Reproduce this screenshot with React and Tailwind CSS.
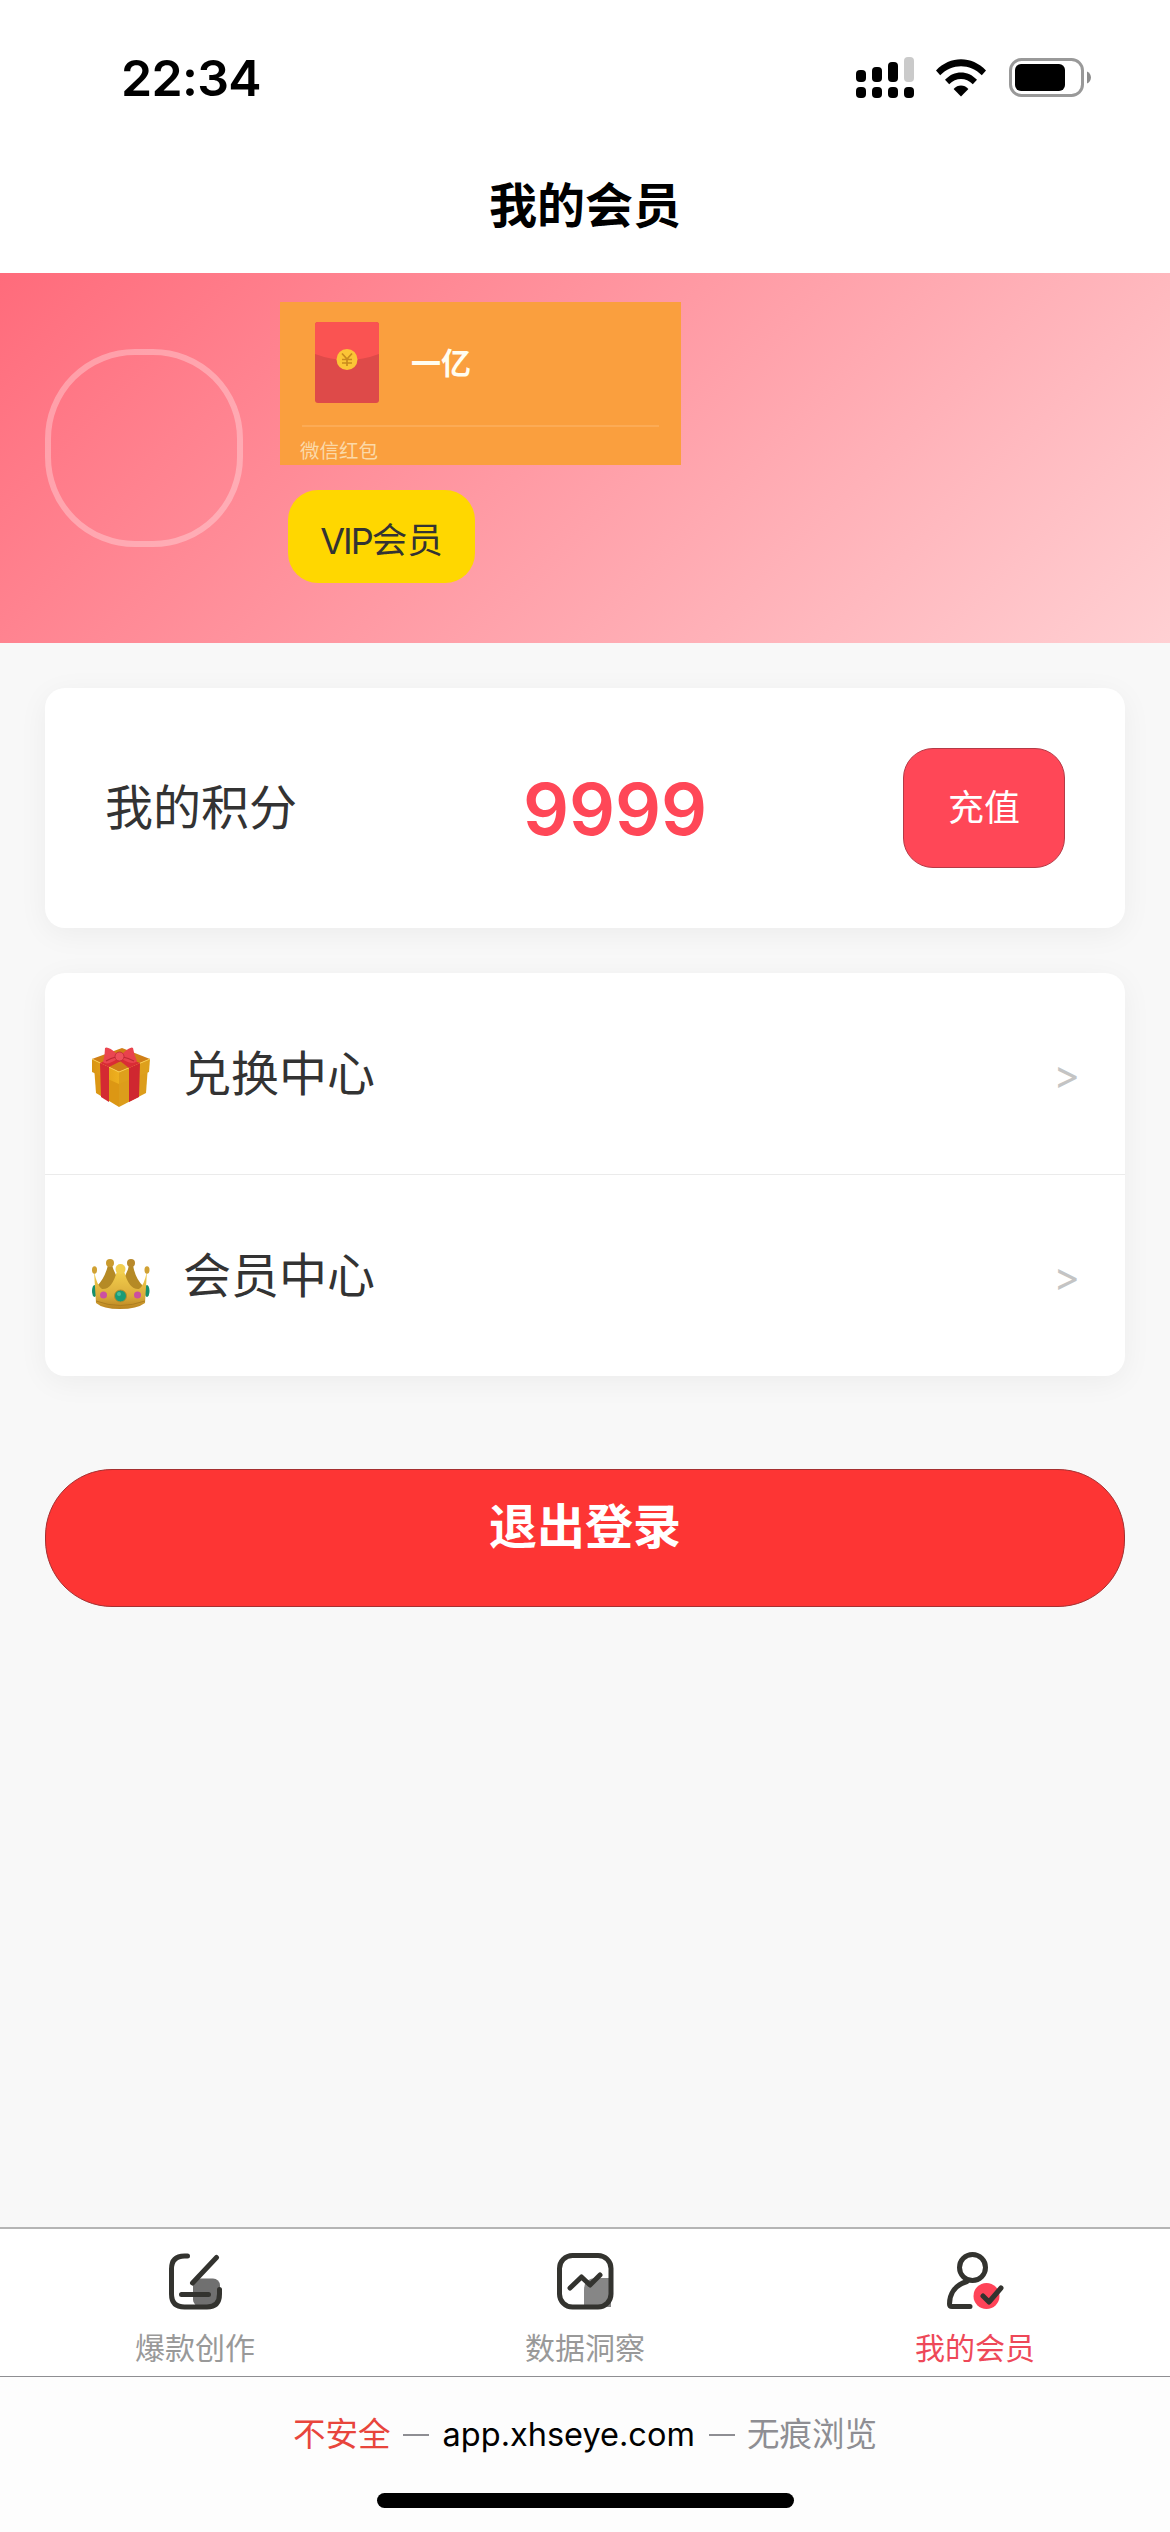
const cjk = "font-['Inter','Noto_Sans_CJK_SC',sans-serif]";

const StatusBar = () => {
  return (
    <div className="flex items-center justify-between h-[156px] pl-[121px] pr-[78px] text-black">
      <span className="font-['Inter'] font-semibold text-[50px] leading-none tracking-[-0.7px]">
        22:34
      </span>
      <div className="flex items-center">
        <svg className="w-[60px] h-[44px]" viewBox="0 0 60 44">
          <rect x="1" y="14" width="10" height="12" rx="4" />
          <rect x="17" y="11" width="10" height="15" rx="4" />
          <rect x="33" y="6" width="10" height="20" rx="4" />
          <rect x="49" y="1" width="10" height="25" rx="4" fill="#cacaca" />
          <rect x="1" y="31" width="10" height="11" rx="4" />
          <rect x="17" y="31" width="10" height="11" rx="4" />
          <rect x="33" y="31" width="10" height="11" rx="4" />
          <rect x="49" y="31" width="10" height="11" rx="4" />
        </svg>
        <svg className="w-[50px] h-[38px] ml-[21px]" viewBox="0 0 50 38">
          <path d="M0 11.5C14-3.5 36-3.5 50 11.5L45.8 16.2C34 4.2 16 4.2 4.2 16.2Z" />
          <path d="M9 20.8C18 11 32 11 41 20.8L36.8 25.3C30 18.2 20 18.2 13.2 25.3Z" />
          <path d="M17.6 30C21.8 25.4 28.2 25.4 32.4 30L25 37.6Z" />
        </svg>
        <svg className="w-[83px] h-[40px] ml-[23px]" viewBox="0 0 83 40">
          <rect x="1.5" y="1.5" width="72" height="36" rx="11" fill="none" stroke="#999" strokeWidth="3" />
          <rect x="6" y="6" width="50" height="27" rx="6" />
          <path d="M78 13.5C83.3 15.5 83.3 23.5 78 25.5Z" fill="#8c8c8c" />
        </svg>
      </div>
    </div>
  );
};

const RedPacket = () => {
  return (
    <div className="flex flex-col w-[401px] h-[163px] bg-[#fa9f3e]">
      <div className="flex h-[101px] pt-[20px] pl-[35px]">
        <svg className="w-[64px] h-[81px]" viewBox="0 0 64 81">
          <rect width="64" height="81" rx="3" fill="#de4a49" />
          <path d="M3 0H61Q64 0 64 3V32Q32 44 0 32V3Q0 0 3 0Z" fill="#fa5352" />
          <circle cx="32" cy="37.500" r="10.500" fill="#fbc536" />
          <path d="M27 31.500L32 37L37 31.500M32 37V44M27 37.500H37M27 41H37" fill="none" stroke="#c98a1d" strokeWidth="1.700" />
        </svg>
        <span className="ml-[32px] mt-[19px] text-[30px] leading-[44px] font-bold text-[#fffdf0]">
          一亿
        </span>
      </div>
      <div className="mx-[22px] mt-[22px] h-[2px] bg-[#fcab55]" />
      <span className="ml-[20px] mt-[10px] text-[19.500px] leading-[28px] text-[#fbd9a8]">
        微信红包
      </span>
    </div>
  );
};

const GiftIcon = () => {
  return (
    <svg className="w-[60px] h-[60px] mt-[6px]" viewBox="0 0 60 60">
      <defs>
        <linearGradient id="giftSide" x1="0" x2="1">
          <stop offset="0" stopColor="#d99413" />
          <stop offset="1" stopColor="#eeb01f" />
        </linearGradient>
      </defs>
      <path d="M3 19L28 31V60L5 46Z" fill="#dc9714" />
      <path d="M57 19L28 31V60L55 46Z" fill="#dc9d1b" />
      <path d="M1 12L31 1L59 12L28 25Z" fill="#d07f16" />
      <path d="M1 12L28 25V37L1 25Z" fill="url(#giftSide)" />
      <path d="M59 12L28 25V37L58 25Z" fill="#dea01c" />
      <path d="M1 12L28 25L59 12" fill="none" stroke="#f8cc4e" strokeWidth="1" />
      <path d="M9 16L18 20V55L10 50Z" fill="#d42a32" />
      <path d="M38 21L49 16L48 50L38 55Z" fill="#cf2730" />
      <path d="M9 16L22 10L32 13L18 20Z" fill="#d92c35" />
      <path d="M24 10L32 9L49 16L38 21Z" fill="#d92c35" />
      <path d="M26 7Q17-1 14 1Q14 8 12 15Q16 19 26 12Z" fill="#ea4650" />
      <path d="M31 7Q40-1 42 1Q43 8 46 14Q42 19 31 12Z" fill="#e9424c" />
      <path d="M15 14Q20 11 25 10M43 14Q37 11 32 10" fill="none" stroke="#bd2833" strokeWidth="1.200" />
      <ellipse cx="28.500" cy="9.500" rx="4.500" ry="4.500" fill="#ee505a" stroke="#bb2833" strokeWidth=".8" />
    </svg>
  );
};

const CrownIcon = () => {
  return (
    <svg className="w-[60px] h-[50px] mt-[16px]" viewBox="0 0 60 50">
      <defs>
        <linearGradient id="crownFront" x1="0" x2="0" y1="0" y2="1">
          <stop offset="0" stopColor="#f3cf4c" />
          <stop offset=".65" stopColor="#dbac3b" />
          <stop offset="1" stopColor="#b9831f" />
        </linearGradient>
      </defs>
      <path d="M6 27Q14 19 17 6H21Q24 16 29.500 24Q36 16 38 6H42Q44 19 52 27L48 38H11Z" fill="#b58a25" />
      <circle cx="19" cy="4" r="4" fill="#c99a2e" />
      <circle cx="40" cy="4" r="4" fill="#b8892b" />
      <ellipse cx="3.500" cy="32" rx="2.500" ry="6" fill="#168f6c" />
      <ellipse cx="56" cy="32" rx="2.500" ry="6" fill="#168f6c" />
      <path d="M3 12Q6 27 11 30Q21 31 26 12H33Q38 31 48 30Q53 27 56 12L54 44Q46 50 29 50Q12 50 5 44Z" fill="url(#crownFront)" />
      <path d="M5 42Q29 51 54 42" fill="none" stroke="#ad7e20" strokeWidth="1" />
      <ellipse cx="3.500" cy="11" rx="2.500" ry="3.700" fill="#d0a133" />
      <ellipse cx="56" cy="11" rx="2.500" ry="3.700" fill="#d0a133" />
      <circle cx="29.500" cy="10" r="5" fill="#f2cf50" />
      <circle cx="29.500" cy="37" r="6" fill="#1a9b76" stroke="#b98d29" strokeWidth="1" />
      <circle cx="28" cy="35" r="2" fill="#48bd9a" />
      <circle cx="12.500" cy="36" r="3.500" fill="#cc4fa1" />
      <circle cx="46.500" cy="36" r="3.500" fill="#cc4fa1" />
    </svg>
  );
};

const MenuRow = ({ icon, label }) => {
  return (
    <div className="flex items-center h-[201px] pl-[46px] pr-[45px]">
      {icon}
      <span className="ml-[32px] text-[48px] leading-[60px] text-[#333]">{label}</span>
      <span className="ml-auto mt-[3px] font-['Inter'] text-[40px] leading-[60px] text-[#c4c4c4]">
        &gt;
      </span>
    </div>
  );
};

const CreateIcon = () => {
  return (
    <svg className="w-[60px] h-[60px]" viewBox="0 0 60 60" fill="none" stroke="#33332f" strokeWidth="5" strokeLinecap="round">
      <rect x="28" y="27.500" width="27" height="28" rx="7" fill="#707070" stroke="none" />
      <path d="M22.500 5H19.500Q6.500 5 6.500 18V43Q6.500 56 19.500 56H42Q54.500 56 54.500 43V38.500" />
      <path d="M27.500 32L51.500 6.500M16.500 43.500H43.500" />
    </svg>
  );
};

const InsightIcon = () => {
  return (
    <svg className="w-[60px] h-[60px]" viewBox="0 0 60 60" fill="none" stroke="#33332f" strokeWidth="5" strokeLinecap="round" strokeLinejoin="round">
      <path d="M29 56V39Q29 27 41 27H56V56Z" fill="#868686" stroke="none" />
      <rect x="4.500" y="4.500" width="51.500" height="51.500" rx="13" />
      <path d="M15 37L26.500 26L35 34L45 24" />
    </svg>
  );
};

const MemberIcon = () => {
  return (
    <svg className="w-[60px] h-[60px]" viewBox="0 0 60 60" fill="none" stroke="#33332f" strokeWidth="5" strokeLinecap="round" strokeLinejoin="round">
      <circle cx="27.500" cy="16.500" r="13" />
      <path d="M22 30.500C10 34 4.500 43 4.500 53Q4.500 55.500 7 55.500H25" />
      <circle cx="41.500" cy="45" r="13" fill="#ff4358" stroke="none" />
      <path d="M38 45L44 51L56 37" />
    </svg>
  );
};

const tabs = [
  { label: "爆款创作", icon: <CreateIcon /> },
  { label: "数据洞察", icon: <InsightIcon /> },
  { label: "我的会员", icon: <MemberIcon />, active: true },
];

const App = () => {
  return (
    <div className={`flex flex-col w-[1170px] h-[2532px] overflow-hidden bg-[#f8f8f8] ${cjk}`}>
      <header className="h-[273px] shrink-0 bg-white">
        <StatusBar />
        <h1 className="pt-[18px] text-center text-[48px] leading-[64px] font-bold text-black">
          我的会员
        </h1>
      </header>

      <section className="flex h-[370px] shrink-0 pl-[45px] bg-[linear-gradient(135deg,#ff6b7b,#ffd0d3)]">
        <div className="w-[198px] h-[198px] mt-[76px] rounded-[90px] border-[6px] border-white/30" />
        <div className="ml-[37px] pt-[29px]">
          <RedPacket />
          <div className="flex items-center justify-center w-[187px] h-[93px] ml-[8px] mt-[25px] pt-[8px] rounded-[30px] bg-[#ffd700] text-[36px] text-[#333]">
            <span className="tracking-[-2px]">VIP</span>
            <span className="text-[35.500px]">会员</span>
          </div>
        </div>
      </section>

      <main className="flex flex-col grow px-[45px] pt-[45px]">
        <div className="flex items-center justify-between h-[240px] px-[60px] rounded-[20px] bg-white shadow-[0_6px_30px_rgba(0,0,0,0.05)]">
          <span className="text-[48px] text-[#333]">我的积分</span>
          <span className="ml-[30px] mt-[2px] font-['Inter'] text-[72px] font-semibold text-[#ff4757]">9999</span>
          <button className="w-[162px] h-[120px] rounded-[30px] border border-[#b53a46] bg-[#ff4757] text-[36px] text-white">
            充值
          </button>
        </div>

        <div className="mt-[45px] rounded-[20px] bg-white shadow-[0_6px_30px_rgba(0,0,0,0.05)]">
          <MenuRow icon={<GiftIcon />} label="兑换中心" />
          <div className="h-px bg-[#ebebeb]" />
          <MenuRow icon={<CrownIcon />} label="会员中心" />
        </div>

        <button className="h-[138px] mt-[93px] pb-[22px] rounded-[67px] border border-[#a52f30] bg-[#fd3534] text-[48px] font-bold text-white">
          退出登录
        </button>
      </main>

      <nav className="grid grid-cols-3 h-[149px] shrink-0 border-t-2 border-[#b5b5b5] bg-white">
        {tabs.map((tab) => (
          <div key={tab.label} className="flex flex-col items-center pt-[22px]">
            {tab.icon}
            <span
              className={`mt-[17px] text-[30px] leading-[40px] ${tab.active ? "text-[#ee4858]" : "text-[#999]"}`}
            >
              {tab.label}
            </span>
          </div>
        ))}
      </nav>

      <footer className="flex flex-col items-center h-[156px] shrink-0 border-t border-[#8e8e92] bg-[#fdfdfd]">
        <div className="flex items-center h-[116px] text-[32.500px] text-[#8e8e93]">
          <span className="text-[#e8453c]">不安全</span>
          <span className="w-[26px] h-[2px] ml-[12px] mr-[14px] bg-[#8e8e93]" />
          <span className="text-black">app.xhseye.com</span>
          <span className="w-[26px] h-[2px] ml-[14px] mr-[12px] bg-[#8e8e93]" />
          <span>无痕浏览</span>
        </div>
        <div className="w-[417px] h-[15px] rounded-full bg-black" />
      </footer>
    </div>
  );
};
export default App;
